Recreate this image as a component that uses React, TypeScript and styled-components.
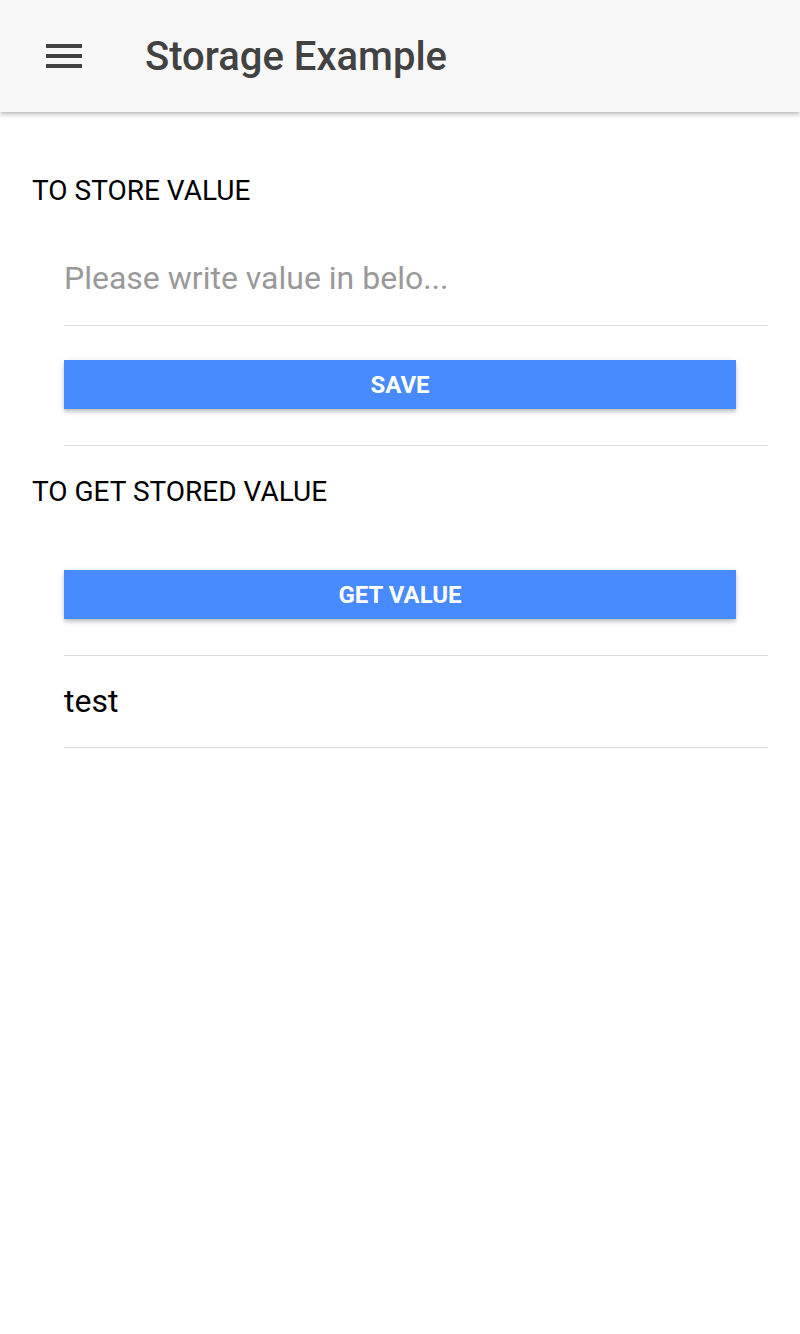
import React, { useState } from 'react';
import styled, { createGlobalStyle } from 'styled-components';

const GlobalStyle = createGlobalStyle`
  html, body {
    margin: 0;
    padding: 0;
    background: #fff;
    font-family: Roboto, "Noto Sans", sans-serif;
  }
`;

const Page = styled.div`
  min-height: 1334px;
  background: #fff;
`;

const Toolbar = styled.header`
  height: 112px;
  display: flex;
  align-items: center;
  padding-left: 46px;
  background: #f8f8f8;
  box-shadow: 0 2px 4px -1px rgba(0, 0, 0, 0.25), 0 4px 5px 0 rgba(0, 0, 0, 0.1);
  position: relative;
  z-index: 1;
`;

const MenuButton = styled.button`
  border: 0;
  padding: 0;
  background: none;
  display: flex;
  width: 36px;
  height: 24px;
  margin-right: 63px;
`;

const Title = styled.h1`
  margin: 0;
  font-size: 40px;
  font-weight: 500;
  color: #424242;
`;

const Content = styled.main`
  padding-top: 59px;
`;

const ListHeader = styled.div<{ $top?: number }>`
  margin-top: ${p => p.$top ?? 0}px;
  padding-left: 32px;
  font-size: 28px;
  line-height: 40px;
  color: #000;
`;

const Item = styled.div<{ $top: number; $bottom: number }>`
  margin: 0 32px 0 64px;
  padding: ${p => p.$top}px 0 ${p => p.$bottom}px;
  border-bottom: 1px solid #dcdcdc;
`;

const TextInput = styled.input`
  display: block;
  width: 100%;
  height: 48px;
  border: 0;
  padding: 0;
  outline: none;
  font-family: inherit;
  font-size: 32px;
  color: #000;
  background: transparent;
  &::placeholder {
    color: #999;
  }
`;

const Button = styled.button`
  display: block;
  width: calc(100% - 32px);
  height: 49px;
  border: 0;
  padding: 0;
  background: #488aff;
  color: #fff;
  font-family: inherit;
  font-size: 24px;
  font-weight: 700;
  text-transform: uppercase;
  box-shadow: 0 3px 3px 0 rgba(0, 0, 0, 0.16), 0 2px 8px 0 rgba(0, 0, 0, 0.1);
`;

const Value = styled.div`
  font-size: 32px;
  line-height: 40px;
  color: #000;
`;

function MenuIcon() {
  return (
    <svg width="36" height="24" viewBox="0 0 36 24" fill="#424242">
      <rect x="0" y="0" width="36" height="4" />
      <rect x="0" y="10" width="36" height="4" />
      <rect x="0" y="20" width="36" height="4" />
    </svg>
  );
}

export default function App() {
  const [input, setInput] = useState('');
  const [stored] = useState('test');

  return (
    <Page>
      <GlobalStyle />
      <Toolbar>
        <MenuButton aria-label="menu">
          <MenuIcon />
        </MenuButton>
        <Title>Storage Example</Title>
      </Toolbar>
      <Content>
        <ListHeader>TO STORE VALUE</ListHeader>
        <Item $top={43} $bottom={23}>
          <TextInput
            value={input}
            onChange={e => setInput(e.target.value)}
            placeholder="Please write value in belo..."
          />
        </Item>
        <Item $top={34} $bottom={36}>
          <Button>Save</Button>
        </Item>
        <ListHeader $top={26}>TO GET STORED VALUE</ListHeader>
        <Item $top={58} $bottom={36}>
          <Button>Get Value</Button>
        </Item>
        <Item $top={25} $bottom={26}>
          <Value>{stored}</Value>
        </Item>
      </Content>
    </Page>
  );
}
